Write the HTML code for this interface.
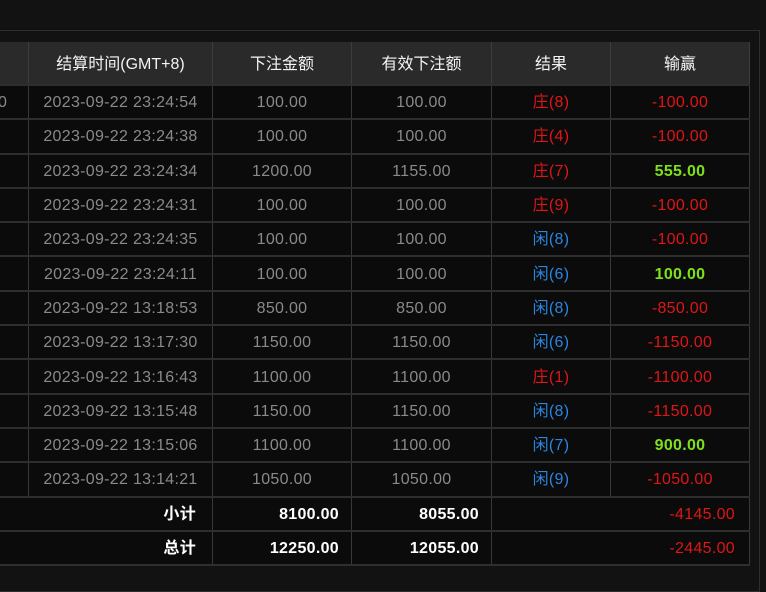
<!DOCTYPE html>
<html><head><meta charset="utf-8"><style>
body{margin:0;background:#121212;width:766px;height:578px;overflow:hidden;position:relative;font-family:"Liberation Sans","Noto Sans CJK SC",sans-serif;}
.frame{position:absolute;left:-2px;top:30px;width:760px;height:560px;border:1px solid #2e2e2e;}
table{position:absolute;left:-3px;top:42px;border-collapse:collapse;table-layout:fixed;}
td,th{padding:0;text-align:center;font-size:16px;white-space:nowrap;overflow:hidden;line-height:20px;}
th{background:#2a2a2a;color:#f4f4f4;font-weight:normal;height:38px;padding-top:4px;border-left:1px solid #3c3c3c;border-right:1px solid #3c3c3c;}
td{background:#0b0b0b;color:#8a8a8a;height:30.3px;padding-top:2px;border-top:2px solid #2e2e2e;border-left:1px solid #383838;border-right:1px solid #383838;letter-spacing:0.3px;}
.r{color:#e01515}.b{color:#2a86e0}.g{color:#7de01a;font-weight:bold}
.s td{color:#fff;font-weight:bold;text-align:right;padding-right:12px;}
.s td.n{color:#e01515;font-weight:normal;padding-right:14px}
</style></head><body>
<div class="frame"></div>
<table>
<colgroup><col style="width:31px"><col style="width:184px"><col style="width:139px"><col style="width:140px"><col style="width:119px"><col style="width:139px"></colgroup>
<tr><th></th><th>结算时间(GMT+8)</th><th>下注金额</th><th>有效下注额</th><th>结果</th><th>输赢</th></tr>
<tr><td style="text-align:left">0</td><td>2023-09-22 23:24:54</td><td>100.00</td><td>100.00</td><td class="r">庄(8)</td><td class="r">-100.00</td></tr>
<tr><td></td><td>2023-09-22 23:24:38</td><td>100.00</td><td>100.00</td><td class="r">庄(4)</td><td class="r">-100.00</td></tr>
<tr><td></td><td>2023-09-22 23:24:34</td><td>1200.00</td><td>1155.00</td><td class="r">庄(7)</td><td class="g">555.00</td></tr>
<tr><td></td><td>2023-09-22 23:24:31</td><td>100.00</td><td>100.00</td><td class="r">庄(9)</td><td class="r">-100.00</td></tr>
<tr><td></td><td>2023-09-22 23:24:35</td><td>100.00</td><td>100.00</td><td class="b">闲(8)</td><td class="r">-100.00</td></tr>
<tr><td></td><td>2023-09-22 23:24:11</td><td>100.00</td><td>100.00</td><td class="b">闲(6)</td><td class="g">100.00</td></tr>
<tr><td></td><td>2023-09-22 13:18:53</td><td>850.00</td><td>850.00</td><td class="b">闲(8)</td><td class="r">-850.00</td></tr>
<tr><td></td><td>2023-09-22 13:17:30</td><td>1150.00</td><td>1150.00</td><td class="b">闲(6)</td><td class="r">-1150.00</td></tr>
<tr><td></td><td>2023-09-22 13:16:43</td><td>1100.00</td><td>1100.00</td><td class="r">庄(1)</td><td class="r">-1100.00</td></tr>
<tr><td></td><td>2023-09-22 13:15:48</td><td>1150.00</td><td>1150.00</td><td class="b">闲(8)</td><td class="r">-1150.00</td></tr>
<tr><td></td><td>2023-09-22 13:15:06</td><td>1100.00</td><td>1100.00</td><td class="b">闲(7)</td><td class="g">900.00</td></tr>
<tr><td></td><td>2023-09-22 13:14:21</td><td>1050.00</td><td>1050.00</td><td class="b">闲(9)</td><td class="r">-1050.00</td></tr>
<tr class="s"><td colspan="2" style="padding-right:16px">小计</td><td>8100.00</td><td>8055.00</td><td colspan="2" class="n">-4145.00</td></tr>
<tr class="s"><td colspan="2" style="padding-right:16px;border-bottom:2px solid #2e2e2e">总计</td><td style="border-bottom:2px solid #2e2e2e">12250.00</td><td style="border-bottom:2px solid #2e2e2e">12055.00</td><td colspan="2" class="n" style="border-bottom:2px solid #2e2e2e">-2445.00</td></tr>
</table>
</body></html>
